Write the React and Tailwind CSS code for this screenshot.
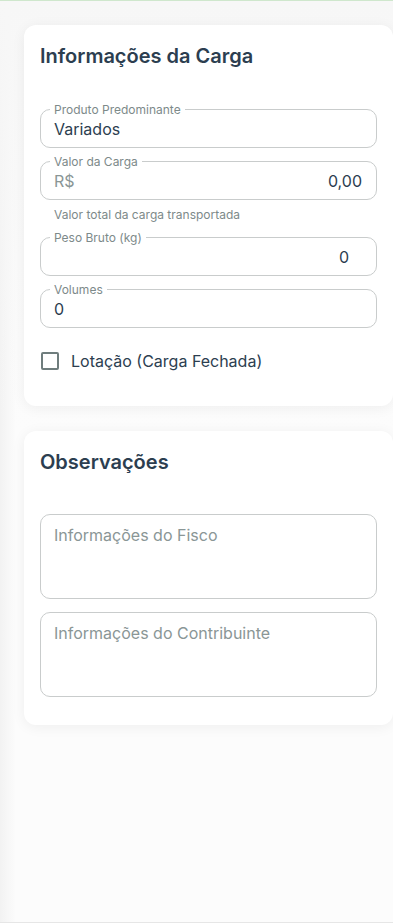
import React from 'react';

const font = { fontFamily: 'Inter, "Noto Sans", sans-serif' };

const Field = ({ label, children }) => (
    <div className="relative h-[39px] rounded-[10px] border border-[#c9cccc] flex items-center px-[13px]">
        <span className="absolute left-[9px] -top-[8px] bg-white px-1 text-[12px] leading-[16px] text-[#7d8a8a]">
            {label}
        </span>
        {children}
    </div>
);

const App = () => {
    return (
        <div
            className="relative min-h-[923px] w-[393px] bg-[#fcfcfc] border-t border-[#cfe7cd] border-b border-b-[#e6e6e6] overflow-hidden"
            style={font}
        >
            <div className="absolute inset-y-0 left-0 w-4 bg-gradient-to-r from-[#f2f2f2] to-transparent"></div>
            <div className="absolute inset-x-0 top-0 h-[430px] bg-gradient-to-b from-[#f7f7f7] to-transparent"></div>
            <div className="relative flex flex-col gap-[25px] pl-6 pt-6">
                {/* Informações da Carga */}
                <div className="bg-white rounded-xl shadow-[0_2px_14px_rgba(0,0,0,0.06)] px-4 pt-4 pb-[33px]">
                    <h2 className="text-[20px] leading-7 font-semibold text-[#2c3e50] mt-px">Informações da Carga</h2>
                    <div className="mt-[39px] flex flex-col">
                        <Field label="Produto Predominante">
                            <span className="text-[16px] text-[#2c3e50]">Variados</span>
                        </Field>
                        <div className="mt-[13px]">
                            <Field label="Valor da Carga">
                                <span className="text-[16px] text-[#8a9696]">R$</span>
                                <span className="ml-auto text-[16px] text-[#2c3e50] pr-px">0,00</span>
                            </Field>
                        </div>
                        <p className="mt-[7px] pl-[14px] text-[12px] leading-4 text-[#7d8a8a]">
                            Valor total da carga transportada
                        </p>
                        <div className="mt-[14px]">
                            <Field label="Peso Bruto (kg)">
                                <span className="ml-auto text-[16px] text-[#2c3e50] pr-[14px]">0</span>
                            </Field>
                        </div>
                        <div className="mt-[13px]">
                            <Field label="Volumes">
                                <span className="text-[16px] text-[#2c3e50]">0</span>
                            </Field>
                        </div>
                        <label className="mt-[21px] flex items-center gap-3">
                            <span className="ml-px w-[18px] h-[18px] rounded-[2px] border-2 border-[#6f7d7d]"></span>
                            <span className="text-[16px] leading-6 text-[#2c3e50]">Lotação (Carga Fechada)</span>
                        </label>
                    </div>
                </div>

                {/* Observações */}
                <div className="bg-white rounded-xl shadow-[0_2px_14px_rgba(0,0,0,0.06)] px-4 pt-4 pb-7">
                    <h2 className="text-[20px] leading-7 font-semibold text-[#2c3e50] mt-px">Observações</h2>
                    <div className="mt-[38px] flex flex-col gap-[13px]">
                        <div className="h-[85px] rounded-[10px] border border-[#c9cccc] px-[13px] pt-[8px]">
                            <span className="text-[16px] leading-6 text-[#8a9696]">Informações do Fisco</span>
                        </div>
                        <div className="h-[85px] rounded-[10px] border border-[#c9cccc] px-[13px] pt-[8px]">
                            <span className="text-[16px] leading-6 text-[#8a9696]">Informações do Contribuinte</span>
                        </div>
                    </div>
                </div>
            </div>
        </div>
    );
};

export default App;
